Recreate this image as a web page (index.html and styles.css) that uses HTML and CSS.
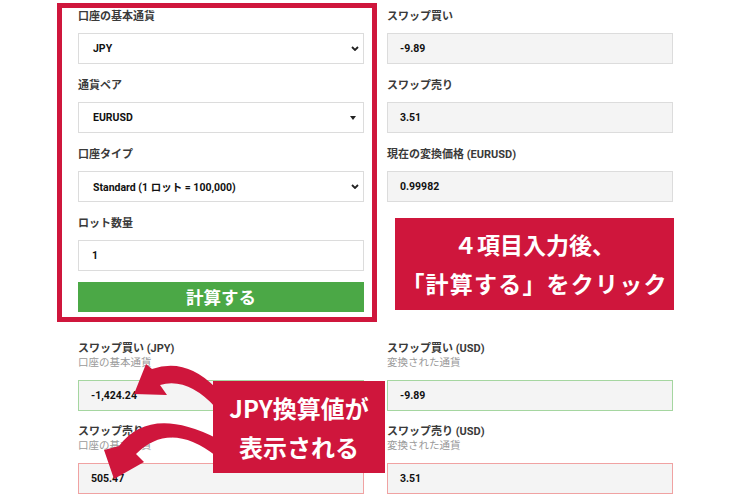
FILE: index.html
```html
<!DOCTYPE html>
<html lang="ja">
<head>
<meta charset="utf-8">
<link rel="stylesheet" href="styles.css">
</head>
<body>
<div class="page">
  <div class="top">
    <div class="col">
      <div class="field">
        <div class="label">口座の基本通貨</div>
        <div class="box select"><span>JPY</span>
          <svg class="chev" width="8" height="5" viewBox="0 0 8 5"><path d="M1 1 L4 4 L7 1" fill="none" stroke="#222" stroke-width="1.8"/></svg>
        </div>
      </div>
      <div class="field">
        <div class="label">通貨ペア</div>
        <div class="box select tri"><span>EURUSD</span>
          <svg class="caret" width="6" height="4" viewBox="0 0 6 4"><polygon points="0,0 6,0 3,4" fill="#222"/></svg>
        </div>
      </div>
      <div class="field">
        <div class="label">口座タイプ</div>
        <div class="box select"><span>Standard (1 ロット = 100,000)</span>
          <svg class="chev" width="8" height="5" viewBox="0 0 8 5"><path d="M1 1 L4 4 L7 1" fill="none" stroke="#222" stroke-width="1.8"/></svg>
        </div>
      </div>
      <div class="field">
        <div class="label">ロット数量</div>
        <div class="box input">1</div>
      </div>
      <div class="btn">計算する</div>
    </div>
    <div class="col">
      <div class="field">
        <div class="label">スワップ買い</div>
        <div class="box ro">-9.89</div>
      </div>
      <div class="field">
        <div class="label">スワップ売り</div>
        <div class="box ro">3.51</div>
      </div>
      <div class="field">
        <div class="label">現在の変換価格 (EURUSD)</div>
        <div class="box ro">0.99982</div>
      </div>
    </div>
  </div>

  <div class="results">
    <div class="res">
      <div class="rlabel">スワップ買い (JPY)</div>
      <div class="sub">口座の基本通貨</div>
      <div class="box ro buy">-1,424.24</div>
    </div>
    <div class="res">
      <div class="rlabel">スワップ買い (USD)</div>
      <div class="sub">変換された通貨</div>
      <div class="box ro buy">-9.89</div>
    </div>
    <div class="res">
      <div class="rlabel">スワップ売り (JPY)</div>
      <div class="sub">口座の基本通貨</div>
      <div class="box ro sell">505.47</div>
    </div>
    <div class="res">
      <div class="rlabel">スワップ売り (USD)</div>
      <div class="sub">変換された通貨</div>
      <div class="box ro sell">3.51</div>
    </div>
  </div>

  <div class="frame"></div>

  <svg class="arrows" width="750" height="500" viewBox="0 0 750 500">
    <path d="M134,394 L146,364 L152,369 Q186,357 216,388 L216,408 Q188,377 160,385 L167,395 Z" fill="#cf163c"/>
    <path d="M114,479 L104,450 L119,446 Q150,405 216,438 L216,456 Q170,420 136,454 L144,462 Z" fill="#cf163c"/>
  </svg>

  <div class="callout c1">
    <div>４項目入力後、</div>
    <div class="wide">「計算する」をクリック</div>
  </div>
  <div class="callout c2">
    <div>JPY換算値が</div>
    <div>表示される</div>
  </div>
</div>
</body>
</html>
```
FILE: styles.css
```css
html, body {
  margin: 0;
  padding: 0;
  background: #fff;
}

.page {
  position: relative;
  width: 750px;
  height: 500px;
  box-sizing: border-box;
  padding: 8px 0 0 78px;
  font-family: Roboto, "Noto Sans CJK JP", sans-serif;
  color: #333;
  overflow: hidden;
}

.top {
  display: grid;
  grid-template-columns: 286px 286px;
  column-gap: 23px;
  align-items: start;
}

.col {
  display: flex;
  flex-direction: column;
  gap: 13px;
}

.field {
  display: flex;
  flex-direction: column;
}

.label {
  height: 18px;
  line-height: 18px;
  font-size: 11px;
  font-weight: 700;
  color: #3a3a3a;
  margin-bottom: 7px;
  white-space: nowrap;
}

.box {
  height: 31px;
  box-sizing: border-box;
  border: 1px solid #dcdcdc;
  background: #fff;
  font-size: 10.5px;
  font-weight: 700;
  color: #111;
  display: flex;
  align-items: center;
  padding: 0 12px;
  white-space: nowrap;
}

.select {
  justify-content: space-between;
  padding: 0 4px 0 14px;
}

.select.tri {
  padding-right: 7px;
}

.input {
  padding-left: 13px;
}

.ro {
  background: #f4f4f4;
}

.btn {
  height: 30px;
  line-height: 30px;
  margin-top: -2px;
  background: #4ba846;
  color: #fff;
  text-align: center;
  font-family: "Noto Sans CJK JP", sans-serif;
  font-size: 17.5px;
  font-weight: 700;
}

.results {
  display: grid;
  grid-template-columns: 286px 286px;
  column-gap: 23px;
  row-gap: 14px;
  margin-top: 30px;
}

.res {
  display: flex;
  flex-direction: column;
}

.rlabel {
  height: 14px;
  line-height: 14px;
  font-size: 11px;
  font-weight: 700;
  color: #3a3a3a;
  white-space: nowrap;
}

.sub {
  height: 14px;
  line-height: 14px;
  font-size: 10.5px;
  color: #9a9a9a;
  margin-bottom: 10px;
  white-space: nowrap;
}

.buy {
  border-color: #a5d6a0;
}

.sell {
  border-color: #f0a2a2;
}

.frame {
  position: absolute;
  left: 57px;
  top: 3px;
  width: 320px;
  height: 319px;
  box-sizing: border-box;
  border: 5px solid #cf163c;
}

.arrows {
  position: absolute;
  left: 0;
  top: 0;
}

.callout {
  position: absolute;
  background: #cf163c;
  color: #fff;
  font-family: "Noto Sans CJK JP", sans-serif;
  font-weight: 700;
  display: flex;
  flex-direction: column;
  justify-content: center;
  align-items: center;
  line-height: 39px;
  white-space: nowrap;
}

.c1 {
  left: 395px;
  top: 218px;
  width: 279px;
  height: 92px;
  font-size: 23px;
}

.c1 .wide {
  letter-spacing: 1.2px;
}

.c2 {
  left: 213px;
  top: 381px;
  width: 172px;
  height: 92px;
  font-size: 24px;
}
```
